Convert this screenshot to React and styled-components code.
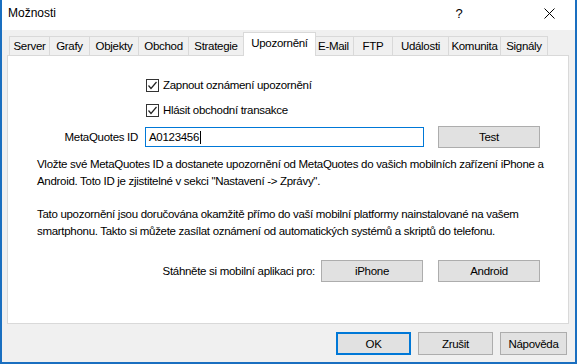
import React from "react";
import styled, { createGlobalStyle } from "styled-components";

const Global = createGlobalStyle`
  html, body {
    margin: 0;
    padding: 0;
    background: #f0f0f0;
  }
  * {
    box-sizing: border-box;
  }
`;

const FONT = `"Liberation Sans", Arial, sans-serif`;

const Window = styled.div`
  width: 577px;
  height: 364px;
  display: flex;
  flex-direction: column;
  border: solid #1a6fc0;
  border-width: 0 2px 2px 2px;
  background: #f0f0f0;
  font-family: ${FONT};
  font-size: 11.5px;
  letter-spacing: -0.3px;
  color: #000;
  overflow: hidden;
`;

const TitleBar = styled.div`
  height: 30px;
  background: #fff;
  display: flex;
  align-items: center;
  padding-left: 6px;
  font-size: 12px;
  letter-spacing: 0;
`;

const Title = styled.div`
  flex: 1;
  margin-top: -4px;
`;

const TitleButton = styled.div`
  width: 46px;
  height: 30px;
  margin-right: ${({ mr }) => mr || 0}px;
  display: flex;
  align-items: center;
  justify-content: center;
  margin-top: -4px;
  font-size: 13px;
`;

const Body = styled.div`
  flex: 1;
  display: flex;
  flex-direction: column;
  padding: 3px 6px 0 5px;
`;

const TabBar = styled.div`
  display: flex;
  align-items: flex-end;
  height: 23px;
  padding-left: 3px;
  position: relative;
  z-index: 1;
`;

const Tab = styled.div`
  width: ${({ w }) => w}px;
  height: ${({ selected }) => (selected ? 24 : 20)}px;
  margin: 0 ${({ selected }) => (selected ? -2 : 0)}px 0 -1px;
  display: flex;
  align-items: center;
  justify-content: center;
  border: 1px solid #d9d9d9;
  border-bottom: ${({ selected }) => (selected ? "none" : "1px solid #d9d9d9")};
  background: ${({ selected }) => (selected ? "#fff" : "#f0f0f0")};
  padding-bottom: ${({ selected }) => (selected ? 4 : 0)}px;
  position: relative;
  z-index: ${({ selected }) => (selected ? 2 : 0)};
  white-space: nowrap;
`;

const Panel = styled.div`
  height: 269px;
  margin-top: -1px;
  background: #fff;
  border: 1px solid #d9d9d9;
  display: flex;
  flex-direction: column;
  padding: 0 20px 0 29px;
`;

const CheckRow = styled.label`
  display: flex;
  align-items: center;
  height: 18px;
  margin-top: ${({ mt }) => mt}px;
  padding-left: 109px;
  gap: 4px;
`;

const Box = styled.span`
  width: 13px;
  height: 13px;
  border: 1px solid #333;
  background: #fff;
  display: flex;
  align-items: center;
  justify-content: center;
`;

const FieldRow = styled.div`
  display: flex;
  align-items: center;
  height: 22px;
  margin-top: 7px;
`;

const FieldLabel = styled.div`
  width: 101px;
  text-align: right;
  margin-right: 7px;
`;

const Input = styled.div`
  width: 279px;
  height: 20px;
  border: 1px solid #0078d7;
  display: flex;
  align-items: center;
  padding-left: 3px;
`;

const Caret = styled.span`
  display: inline-block;
  width: 1px;
  height: 13px;
  background: #000;
  margin-left: 1px;
`;

const Button = styled.div`
  width: ${({ w }) => w || 102}px;
  height: ${({ h }) => h || 22}px;
  margin-left: ${({ ml }) => ml || 0}px;
  border: ${({ primary }) => (primary ? "2px solid #0078d7" : "1px solid #adadad")};
  background: #e1e1e1;
  display: flex;
  align-items: center;
  justify-content: center;
`;

const Paragraph = styled.p`
  margin: ${({ mt }) => mt}px 0 0 0;
  line-height: 16.5px;
  white-space: nowrap;
`;

const DownloadRow = styled.div`
  display: flex;
  align-items: center;
  justify-content: flex-end;
  height: 22px;
  margin-top: 21px;
  padding-right: 8px;
`;

const DownloadLabel = styled.div`
  white-space: nowrap;
  margin-right: 6px;
`;

const Footer = styled.div`
  display: flex;
  justify-content: flex-end;
  padding: 8px 2px 0 0;
  gap: 7px;
`;

const CloseIcon = () => (
  <svg width="11" height="11" viewBox="0 0 11 11">
    <path d="M0.5 0.5 L10.5 10.5 M10.5 0.5 L0.5 10.5" stroke="#000" strokeWidth="1" />
  </svg>
);

const Check = () => (
  <svg width="11" height="11" viewBox="0 0 11 11">
    <path d="M1.5 5.5 L4 8.5 L9.5 2" stroke="#222" strokeWidth="1.2" fill="none" />
  </svg>
);

const tabs = [
  ["Server", 41],
  ["Grafy", 41],
  ["Objekty", 50],
  ["Obchod", 51],
  ["Strategie", 56],
  ["Upozornění", 73, true],
  ["E-Mail", 41],
  ["FTP", 40],
  ["Události", 57],
  ["Komunita", 53],
  ["Signály", 48],
];

export default function App() {
  return (
    <Window>
      <Global />
      <TitleBar>
        <Title>Možnosti</Title>
        <TitleButton mr={44}>?</TitleButton>
        <TitleButton mr={3}>
          <CloseIcon />
        </TitleButton>
      </TitleBar>
      <Body>
        <TabBar>
          {tabs.map(([name, w, selected]) => (
            <Tab key={name} w={w} selected={selected}>
              {name}
            </Tab>
          ))}
        </TabBar>
        <Panel>
          <CheckRow mt={20}>
            <Box>
              <Check />
            </Box>
            Zapnout oznámení upozornění
          </CheckRow>
          <CheckRow mt={7}>
            <Box>
              <Check />
            </Box>
            Hlásit obchodní transakce
          </CheckRow>
          <FieldRow>
            <FieldLabel>MetaQuotes ID</FieldLabel>
            <Input>
              A0123456
              <Caret />
            </Input>
            <Button ml={14}>Test</Button>
          </FieldRow>
          <Paragraph mt={8}>
            Vložte své MetaQuotes ID a dostanete upozornění od MetaQuotes do vašich mobilních zařízení iPhone a
            <br />
            Android. Toto ID je zjistitelné v sekci "Nastavení -&gt; Zprávy".
          </Paragraph>
          <Paragraph mt={17}>
            Tato upozornění jsou doručována okamžitě přímo do vaší mobilní platformy nainstalované na vašem
            <br />
            smartphonu. Takto si můžete zasílat oznámení od automatických systémů a skriptů do telefonu.
          </Paragraph>
          <DownloadRow>
            <DownloadLabel>Stáhněte si mobilní aplikaci pro:</DownloadLabel>
            <Button>iPhone</Button>
            <Button ml={15}>Android</Button>
          </DownloadRow>
        </Panel>
        <Footer>
          <Button w={75} h={23} primary>
            OK
          </Button>
          <Button w={75} h={23}>
            Zrušit
          </Button>
          <Button w={67} h={23}>
            Nápověda
          </Button>
        </Footer>
      </Body>
    </Window>
  );
}
